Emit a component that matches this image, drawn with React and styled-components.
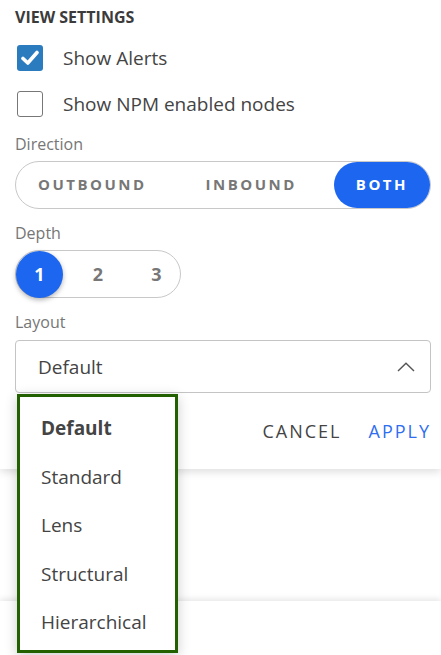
import styled, { createGlobalStyle } from "styled-components";
import { useState } from "react";

const GlobalStyle = createGlobalStyle`
  body {
    margin: 0;
    background: #fff;
    font-family: "Open Sans", "Liberation Sans", sans-serif;
    overflow: hidden;
  }
`;

const Page = styled.div`
  width: 441px;
  height: 655px;
  overflow: hidden;
  background: #fff;
`;

const Card = styled.div`
  padding: 7px 10px 26px 15px;
  background: #fff;
  box-shadow: 0 3px 8px rgba(0, 0, 0, 0.13);
  position: relative;
  z-index: 1;
`;

const NextCard = styled.div`
  margin-top: 132px;
  height: 60px;
  background: #fff;
  box-shadow: 0 -2px 6px rgba(0, 0, 0, 0.1);
`;

const Title = styled.div`
  font-size: 16px;
  line-height: 20px;
  font-weight: 700;
  color: #3b3b3b;
`;

const CheckRow = styled.label`
  display: flex;
  align-items: center;
  gap: 20px;
  margin-top: ${(p) => p.$top}px;
  padding-left: 2px;
  font-size: 19px;
  color: #444;
  line-height: 26px;
`;

const Box = styled.span`
  width: 26px;
  height: 26px;
  box-sizing: border-box;
  border-radius: 3px;
  display: flex;
  align-items: center;
  justify-content: center;
  background: ${(p) => (p.$checked ? "#2b7bbf" : "#fff")};
  border: ${(p) => (p.$checked ? "none" : "1.5px solid #777")};
`;

const Label = styled.div`
  margin-top: ${(p) => p.$top}px;
  font-size: 16px;
  line-height: 20px;
  color: #767676;
`;

const Toggle = styled.div`
  margin-top: 7px;
  height: 48px;
  box-sizing: border-box;
  border: 1px solid #c8c8c8;
  border-radius: 24px;
  display: flex;
  align-items: center;
  justify-content: space-between;
  width: ${(p) => (p.$narrow ? "166px" : "auto")};
  gap: ${(p) => (p.$narrow ? "11px" : "0")};
`;

const Segment = styled.button`
  all: unset;
  height: 46px;
  box-sizing: border-box;
  padding: 0 22px 2px;
  border-radius: 23px;
  display: flex;
  align-items: center;
  justify-content: center;
  font-family: "Open Sans", "Liberation Sans", sans-serif;
  font-size: 15px;
  font-weight: 700;
  letter-spacing: 2.5px;
  color: ${(p) => (p.$active ? "#fff" : "#777")};
  background: ${(p) => (p.$active ? "#1c66f0" : "transparent")};
  cursor: pointer;
`;

const Dot = styled.button`
  all: unset;
  width: 47px;
  height: 47px;
  border-radius: 50%;
  display: flex;
  align-items: center;
  justify-content: center;
  font-family: "Open Sans", "Liberation Sans", sans-serif;
  font-size: 18px;
  font-weight: 700;
  color: ${(p) => (p.$active ? "#fff" : "#777")};
  background: ${(p) => (p.$active ? "#1c66f0" : "transparent")};
  box-shadow: ${(p) => (p.$active ? "0 2px 5px rgba(0,0,0,0.3)" : "none")};
  cursor: pointer;
`;

const SelectWrap = styled.div`
  position: relative;
  margin-top: 8px;
`;

const SelectBox = styled.div`
  height: 53px;
  box-sizing: border-box;
  border: 1px solid #c4c4c4;
  border-radius: 4px;
  display: flex;
  align-items: center;
  justify-content: space-between;
  padding: 0 15px 0 22px;
  font-size: 19px;
  color: #444;
`;

const Menu = styled.ul`
  position: absolute;
  top: 54px;
  left: 2px;
  width: 161px;
  box-sizing: border-box;
  margin: 0;
  padding: 7px 0 3px;
  list-style: none;
  background: #fff;
  border: 3px solid #236100;
  box-shadow: 0 3px 12px rgba(0, 0, 0, 0.2);
  z-index: 5;
`;

const MenuItem = styled.li`
  height: 48.5px;
  display: flex;
  align-items: center;
  padding-left: 21px;
  font-size: 19px;
  color: #444;
  font-weight: ${(p) => (p.$selected ? 700 : 400)};
`;

const Actions = styled.div`
  margin-top: 26px;
  display: flex;
  justify-content: flex-end;
  gap: 27px;
`;

const TextButton = styled.button`
  all: unset;
  font-family: "Open Sans", "Liberation Sans", sans-serif;
  font-size: 18px;
  line-height: 24px;
  letter-spacing: 2px;
  color: ${(p) => (p.$primary ? "#2f6ef0" : "#444")};
  cursor: pointer;
`;

const Check = () => (
  <svg width="18" height="16" viewBox="0 0 18 16">
    <path d="M2 8.5 L6.8 13 L16 2.5" fill="none" stroke="#fff" strokeWidth="3.6" strokeLinecap="round" strokeLinejoin="round" />
  </svg>
);

const Chevron = () => (
  <svg width="18" height="10" viewBox="0 0 18 10">
    <path d="M1 9 L9 1.2 L17 9" fill="none" stroke="#555" strokeWidth="1.4" />
  </svg>
);

const layouts = ["Default", "Standard", "Lens", "Structural", "Hierarchical"];

const App = () => {
  const [alerts, setAlerts] = useState(true);
  const [npm, setNpm] = useState(false);
  const [direction, setDirection] = useState("both");
  const [depth, setDepth] = useState(1);
  const [layout, setLayout] = useState("Default");

  return (
    <Page>
      <GlobalStyle />
      <Card>
        <Title>VIEW SETTINGS</Title>
        <CheckRow $top={18} onClick={() => setAlerts(!alerts)}>
          <Box $checked={alerts}>{alerts && <Check />}</Box>
          Show Alerts
        </CheckRow>
        <CheckRow $top={20} onClick={() => setNpm(!npm)}>
          <Box $checked={npm}>{npm && <Check />}</Box>
          Show NPM enabled nodes
        </CheckRow>

        <Label $top={17}>Direction</Label>
        <Toggle>
          {["outbound", "inbound", "both"].map((d) => (
            <Segment key={d} $active={direction === d} onClick={() => setDirection(d)}>
              {d.toUpperCase()}
            </Segment>
          ))}
        </Toggle>

        <Label $top={14}>Depth</Label>
        <Toggle $narrow>
          {[1, 2, 3].map((n) => (
            <Dot key={n} $active={depth === n} onClick={() => setDepth(n)}>
              {n}
            </Dot>
          ))}
        </Toggle>

        <Label $top={14}>Layout</Label>
        <SelectWrap>
          <SelectBox>
            {layout}
            <Chevron />
          </SelectBox>
          <Menu>
            {layouts.map((l) => (
              <MenuItem key={l} $selected={layout === l} onClick={() => setLayout(l)}>
                {l}
              </MenuItem>
            ))}
          </Menu>
        </SelectWrap>

        <Actions>
          <TextButton>CANCEL</TextButton>
          <TextButton $primary>APPLY</TextButton>
        </Actions>
      </Card>
      <NextCard />
    </Page>
  );
};

export default App;
